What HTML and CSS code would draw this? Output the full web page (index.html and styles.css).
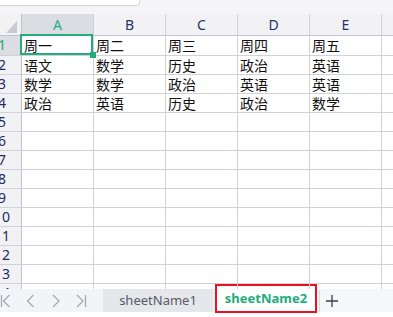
FILE: index.html
```html
<!DOCTYPE html>
<html lang="zh">
<head>
  <meta charset="UTF-8" />
  <title>Sheet</title>
  <link rel="stylesheet" href="styles.css">
</head>
<body>
  <div class="app">
    <div class="strip">
      <div class="formula-box"></div>
    </div>

    <div class="sheet">
      <div class="grid" id="grid">
        <div class="corner"><span class="tri"></span></div>
        <div class="col-head active">A</div>
        <div class="col-head">B</div>
        <div class="col-head">C</div>
        <div class="col-head">D</div>
        <div class="col-head">E</div>
        <div class="col-head"></div>
      </div>
    </div>

    <div class="tabs">
      <div class="nav">
        <svg width="12" height="16" viewBox="0 0 12 16"><path d="M1.5 2v12M9.5 2L3.5 8l6 6" fill="none" stroke="#a7aab3" stroke-width="1.3"/></svg>
        <svg width="12" height="16" viewBox="0 0 12 16"><path d="M8.5 2L2.5 8l6 6" fill="none" stroke="#a7aab3" stroke-width="1.3"/></svg>
        <svg width="12" height="16" viewBox="0 0 12 16"><path d="M3 2l6 6-6 6" fill="none" stroke="#a7aab3" stroke-width="1.3"/></svg>
        <svg width="12" height="16" viewBox="0 0 12 16"><path d="M2 2l6 6-6 6M10.5 2v12" fill="none" stroke="#a7aab3" stroke-width="1.3"/></svg>
      </div>
      <div class="tab">sheetName1</div>
      <div class="tab tab-active">sheetName2</div>
      <div class="tab-add">
        <svg width="14" height="14" viewBox="0 0 14 14"><path d="M7 1v12M1 7h12" fill="none" stroke="#3b3e4a" stroke-width="1.3"/></svg>
      </div>
    </div>
  </div>

  <script>
    const data = [
      ["周一", "周二", "周三", "周四", "周五"],
      ["语文", "数学", "历史", "政治", "英语"],
      ["数学", "数学", "政治", "英语", "英语"],
      ["政治", "英语", "历史", "政治", "数学"]
    ];

    const grid = document.getElementById("grid");
    for (let r = 1; r <= 14; r++) {
      const head = document.createElement("div");
      head.className = "row-head" + (r === 1 ? " active" : "");
      head.textContent = r;
      grid.appendChild(head);
      for (let c = 0; c < 6; c++) {
        const cell = document.createElement("div");
        cell.className = "cell";
        const row = data[r - 1];
        if (row && row[c]) cell.textContent = row[c];
        if (r === 1 && c === 0) {
          cell.classList.add("selected");
          cell.innerHTML += '<span class="sel-box"></span><span class="sel-handle"></span>';
        }
        grid.appendChild(cell);
      }
    }
  </script>
</body>
</html>
```

FILE: styles.css
```css
body {
  margin: 0;
  font-family: "Noto Sans", "Noto Sans CJK SC", sans-serif;
  background: #fff;
  overflow: hidden;
}

.app {
  width: 393px;
  height: 317px;
  overflow: hidden;
  display: flex;
  flex-direction: column;
}

.strip {
  height: 14px;
  flex-shrink: 0;
  background: #f5f5f7;
}

.formula-box {
  width: 139px;
  height: 5px;
  background: #fff;
  border-right: 1px solid #d6d7dc;
  border-bottom: 1px solid #d6d7dc;
  border-bottom-right-radius: 4px;
}

.sheet {
  height: 275px;
  flex-shrink: 0;
  overflow: hidden;
}

.grid {
  margin-left: -14px;
  display: grid;
  grid-template-columns: 36px repeat(6, 72px);
  grid-template-rows: 22px 20px repeat(13, 19px);
}

.corner,
.col-head {
  background: #f2f2f5;
  border-right: 1px solid #cfd2dc;
  border-bottom: 1px solid #c1c4ce;
  box-sizing: border-box;
}

.corner {
  border-right-color: #c1c4ce;
  position: relative;
}

.tri {
  position: absolute;
  right: 4px;
  bottom: 2px;
  width: 0;
  height: 0;
  border-left: 11px solid transparent;
  border-bottom: 12px solid #c9cad1;
}

.col-head {
  font-size: 14px;
  color: #24336a;
  text-align: center;
  line-height: 21px;
}

.col-head.active {
  background: #dcdde3;
  color: #22ad7a;
}

.row-head {
  background: #f2f2f5;
  border-right: 1px solid #c1c4ce;
  border-bottom: 1px solid #cfd2dc;
  box-sizing: border-box;
  font-size: 14px;
  color: #1e2b5c;
  text-align: center;
  line-height: 18px;
  padding-right: 3px;
}

.row-head.active {
  background: #dcdde3;
  color: #22ad7a;
}

.cell {
  border-right: 1px solid #cfd2dc;
  border-bottom: 1px solid #cfd2dc;
  box-sizing: border-box;
  font-family: "Noto Sans CJK SC", sans-serif;
  font-size: 14px;
  color: #111;
  line-height: 19px;
  padding-left: 2px;
  white-space: nowrap;
  position: relative;
}

.cell.selected {
  z-index: 2;
}

.sel-box {
  position: absolute;
  top: -2px;
  left: -2px;
  right: 0;
  bottom: 0;
  border: 2px solid #22ad7a;
}

.sel-handle {
  position: absolute;
  right: -3px;
  bottom: -3px;
  width: 6px;
  height: 6px;
  background: #22ad7a;
}

.tabs {
  height: 23px;
  flex-shrink: 0;
  background: #f3f4f7;
  display: flex;
  align-items: stretch;
}

.nav {
  width: 103px;
  display: flex;
  align-items: center;
  gap: 13px;
  box-sizing: border-box;
}

.tab {
  width: 110px;
  background: #e6e7eb;
  font-size: 13px;
  color: #555a66;
  text-align: center;
  line-height: 23px;
  box-sizing: border-box;
}

.tab-active {
  width: 102px;
  margin: -5px 2px -1px 2px;
  background: #fff;
  border: 2px solid #e8131f;
  color: #22ad7a;
  font-weight: bold;
  line-height: 25px;
}

.tab-add {
  flex: 1;
  background: #f6f7f9;
  border-left: 1px solid #dcdde2;
  border-top-left-radius: 3px;
  display: flex;
  align-items: center;
  padding-left: 5px;
}
```
